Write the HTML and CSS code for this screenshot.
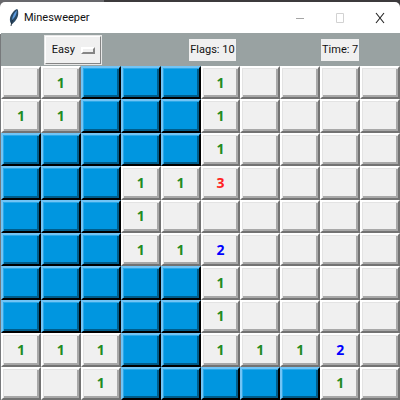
FILE: index.html
```
<!DOCTYPE html>
<html lang="en">
<head>
<meta charset="utf-8">
<meta name="viewport" content="width=device-width, initial-scale=1">
<title>Minesweeper</title>
<link rel="stylesheet" href="styles.css">
</head>
<body>
<main class="window">
  <header class="titlebar">
    <svg class="feather" viewBox="0 0 10 18" aria-hidden="true">
      <path d="M8 0C5 1 2 5 1 9c-.5 3 .4 5 1.600 6.500C6 13 9 9 9.200 5 9.400 2 9 .5 8 0z" fill="#294964"/>
      <path d="M7.600 1.500C5 4 3.500 7 3 11c2.500-2 4.600-5 4.900-9.500z" fill="#5b9be0"/>
      <path d="M3.500 11C2.800 13 2.300 15 2 17" fill="none" stroke="#1d2b3a" stroke-width=".9"/>
    </svg>
    <h1 class="title">Minesweeper</h1>
    <div class="controls">
      <button class="control" aria-label="Minimize"><svg viewBox="0 0 10 12"><path d="M1 6.500h8" stroke="#a5a5a5"/></svg></button>
      <button class="control" aria-label="Maximize" disabled><svg viewBox="0 0 10 12"><path d="M1.500 1.500h7v9h-7z" stroke="#d2d2d2"/></svg></button>
      <button class="control" aria-label="Close"><svg viewBox="0 0 10 12"><path d="M1 1l8 10M9 1L1 11" stroke="#222" stroke-width="1.100"/></svg></button>
    </div>
  </header>
  <section class="toolbar">
    <div class="picker">
      <select class="level" aria-label="Difficulty"><option>Easy</option></select>
      <span class="knob"></span>
    </div>
    <div class="status">Flags: 10</div>
    <div class="status">Time: 7</div>
  </section>
  <section class="board" id="board" aria-label="Minefield"></section>
</main>
<script src="board.js"></script>
</body>
</html>
```
FILE: styles.css
```
* { box-sizing: border-box; }

body {
  margin: 0;
  background: linear-gradient(90deg, #68686c 26%, #3c3a3c 26%);
  color: #111;
  font: 11px/16px Roboto, "Liberation Sans", sans-serif;
}

button, select { font: inherit; }

.window {
  display: flex;
  flex-direction: column;
  min-height: calc(100vh - 2px);
  margin-top: 2px;
  padding-left: 1px;
  border-radius: 5px 5px 0 0;
  background: linear-gradient(#fff 32px, #77797b 32px);
}

.titlebar {
  display: flex;
  align-items: center;
  height: 31px;
  padding-left: 8px;
}

.feather { width: 10px; height: 18px; }

.title {
  margin: 0 0 0 5px;
  font-size: 11px;
  font-weight: 400;
}

.controls { display: flex; margin-left: auto; }

.control {
  display: grid;
  place-items: center;
  width: 40px;
  height: 31px;
  padding: 0;
  border: 0;
  background: none;
}

.control svg { width: 10px; height: 12px; fill: none; }

.toolbar {
  display: grid;
  grid-template-columns: 36fr 34fr 30fr;
  place-items: center;
  height: 33px;
  background: #99a2a2;
}

.picker { position: relative; }

.level {
  display: block;
  appearance: none;
  width: 58px;
  height: 30px;
  padding: 0 0 0 6px;
  border: 2px solid;
  border-color: #fff #858585 #858585 #fff;
  border-radius: 0;
  outline: 1px solid #e8e8e8;
  outline-offset: -1px;
  background: #f0f0f0;
  color: #111;
}

.knob {
  position: absolute;
  top: 12px;
  right: 7px;
  width: 14px;
  height: 7px;
  border: 2px solid;
  border-color: #fff #858585 #858585 #fff;
  background: #f0f0f0;
  pointer-events: none;
}

.status {
  padding: 3px 1px;
  background: #f0f0f0;
}

.board {
  display: grid;
  flex: 1;
  grid-template-columns: repeat(10, 1fr);
  grid-auto-rows: 1fr;
}

.cell {
  min-width: 0;
  min-height: 32px;
  padding: 0;
  border: 2px solid;
  border-color: #fff #737373 #737373 #fff;
  background: #f0f0f0;
  box-shadow: inset 1px 1px #e3e3e3, inset -2px -2px #a8a8a8;
  font: 700 14px/16px "Open Sans", sans-serif;
}

.covered {
  border-color: #72c4f5 #000 #000 #72c4f5;
  background: #0096e0;
  box-shadow: inset 1px 1px #2aa8e8, inset -2px -2px #005c8a;
}

.n1 { color: #228b22; }
.n2 { color: #00f; }
.n3 { color: #f22; }
```
FILE: board.js
```
// "#" is a covered cell, "." an empty one, a digit the count of nearby mines.
const rows = [
  ".1###1....",
  "11###1....",
  "#####1....",
  "###113....",
  "###1......",
  "###112....",
  "#####1....",
  "#####1....",
  "111##1112.",
  "..1#####1."
];

const board = document.getElementById("board");
rows.forEach((row, y) => {
  [...row].forEach((mark, x) => {
    const cell = document.createElement("button");
    cell.className = "cell";
    cell.setAttribute("aria-label", `Row ${y + 1}, column ${x + 1}`);
    if (mark === "#") cell.classList.add("covered");
    else if (mark !== ".") {
      cell.classList.add("n" + mark);
      cell.textContent = mark;
    }
    board.append(cell);
  });
});
```
